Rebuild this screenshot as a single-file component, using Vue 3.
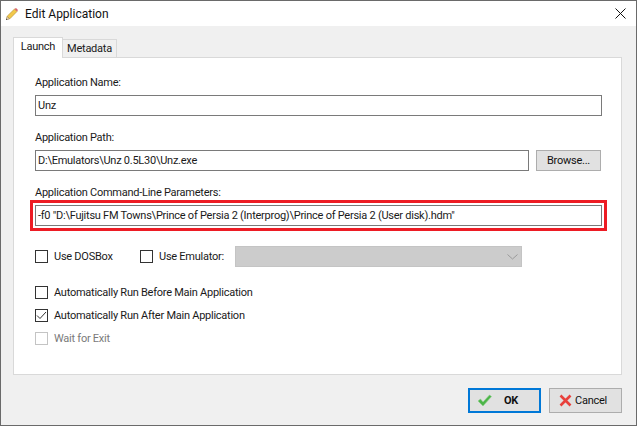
<script setup>
const autos = [
  { label: 'Automatically Run Before Main Application', checked: false, disabled: false },
  { label: 'Automatically Run After Main Application', checked: true, disabled: false },
  { label: 'Wait for Exit', checked: false, disabled: true },
]
</script>

<template>
  <div class="window">
    <header class="titlebar">
      <svg class="pencil" width="12" height="12" viewBox="1 1 12 12">
        <path d="M1 13 L2 9.5 L4.5 12 Z" fill="#e8d3a8" stroke="#8a7350" stroke-width=".5" />
        <path d="M1 13 L1.4 11.6 L2.4 12.6 Z" fill="#333" />
        <path d="M2.2 9.2 L9.5 2 L12 4.5 L4.8 11.8 Z" fill="#f2c84a" stroke="#b08a2a" stroke-width=".6" />
        <path d="M9.5 2 L11 1 L13 3 L12 4.5 Z" fill="#d9626a" />
      </svg>
      <span class="title">Edit Application</span>
      <svg class="close" width="11" height="11" viewBox="0 0 11 11">
        <path d="M.5 .5 L10.5 10.5 M10.5 .5 L.5 10.5" stroke="#111" stroke-width="1" fill="none" />
      </svg>
    </header>

    <div class="body">
      <nav class="tabs">
        <div class="tab active">Launch</div>
        <div class="tab">Metadata</div>
      </nav>

      <section class="panel">
        <label class="label">Application Name:</label>
        <div class="input">Unz</div>

        <label class="label">Application Path:</label>
        <div class="row">
          <div class="input grow">D:\Emulators\Unz 0.5L30\Unz.exe</div>
          <button class="btn browse">Browse...</button>
        </div>

        <label class="label">Application Command-Line Parameters:</label>
        <div class="highlighted">
          <div class="input">-f0 "D:\Fujitsu FM Towns\Prince of Persia 2 (Interprog)\Prince of Persia 2 (User disk).hdm"</div>
          <div class="redbox"></div>
        </div>

        <div class="emu-row">
          <span class="check-item dos">
            <span class="box"></span>
            <span>Use DOSBox</span>
          </span>
          <span class="check-item emu">
            <span class="box"></span>
            <span>Use Emulator:</span>
          </span>
          <div class="combo">
            <svg width="11" height="6" viewBox="0 0 11 6">
              <path d="M.5 .5 L5.5 5 L10.5 .5" stroke="#9a9a9a" fill="none" />
            </svg>
          </div>
        </div>

        <div class="autos">
          <div v-for="a in autos" :key="a.label" class="check-item auto" :class="{ disabled: a.disabled }">
            <span class="box">
              <svg v-if="a.checked" width="11" height="11" viewBox="0 0 11 11">
                <path d="M1 5.5 L4 8.5 L10 2" stroke="#333" stroke-width="1" fill="none" />
              </svg>
            </span>
            <span>{{ a.label }}</span>
          </div>
        </div>
      </section>

      <footer class="actions">
        <button class="btn action primary">
          <svg width="15" height="13" viewBox="0 0 15 13">
            <path d="M1 7 L3.5 5 L6 8 L12.5 1 L14.5 2.5 L6 12 Z" fill="#4cb548" stroke="#8fce8c" stroke-width=".6" />
          </svg>
          <span class="ok">OK</span>
        </button>
        <button class="btn action">
          <svg width="13" height="13" viewBox="0 0 13 13">
            <path d="M1.5 1.5 L11.5 11.5 M11.5 1.5 L1.5 11.5" stroke="#e8403c" stroke-width="2.6" fill="none" />
          </svg>
          <span class="cancel">Cancel</span>
        </button>
      </footer>
    </div>
  </div>
</template>

<style>
html, body { margin: 0; background: #f0f0f0; }
</style>

<style scoped>
.window {
  width: 637px;
  height: 426px;
  box-sizing: border-box;
  border: 1px solid #6a6a6a;
  display: flex;
  flex-direction: column;
  font-family: Roboto, "Noto Sans", sans-serif;
  font-size: 11px;
  letter-spacing: -0.25px;
  color: #1a1a1a;
  background: #f0f0f0;
}
.titlebar {
  height: 25px;
  background: #fff;
  display: flex;
  align-items: center;
  padding: 0 10px 0 5px;
  flex: none;
}
.pencil { margin-right: 7px; }
.title { flex: 1; font-size: 12px; letter-spacing: 0; color: #111; }
.body {
  flex: 1;
  padding: 12px 14px 0 12px;
  display: flex;
  flex-direction: column;
}
.tabs { display: flex; height: 20px; align-items: flex-end; position: relative; z-index: 1; margin-bottom: -1px; }
.tab {
  box-sizing: border-box;
  height: 19px;
  width: 54px;
  border: 1px solid #d9d9d9;
  border-left: 0;
  background: #f0f0f0;
  line-height: 17px;
  text-align: center;
}
.tab.active {
  width: 50px;
  height: 21px;
  border-left: 1px solid #d9d9d9;
  border-bottom: 0;
  background: #fff;
  line-height: 18px;
}
.panel {
  box-sizing: border-box;
  height: 318px;
  background: #fff;
  border: 1px solid #d9d9d9;
  padding: 15px 19px 0 21px;
  display: flex;
  flex-direction: column;
}
.label { height: 22px; line-height: 19px; }
.input {
  box-sizing: border-box;
  height: 21px;
  border: 1px solid #7a7a7a;
  background: #fff;
  padding: 0 2px;
  line-height: 20px;
  white-space: nowrap;
  overflow: hidden;
}
.panel > .input { margin-bottom: 12px; }
.row { display: flex; gap: 7px; margin-bottom: 12px; }
.grow { flex: 1; }
.btn {
  box-sizing: border-box;
  font: inherit;
  letter-spacing: inherit;
  color: #111;
  background: #e1e1e1;
  border: 1px solid #adadad;
  padding: 0;
}
.browse { width: 65px; height: 21px; margin-right: 1px; }
.highlighted { position: relative; margin-bottom: 20px; }
.redbox {
  position: absolute;
  left: -5px;
  right: -5px;
  top: -5px;
  bottom: -5px;
  border: 3px solid #ed1c24;
  pointer-events: none;
}
.emu-row { display: flex; align-items: center; height: 21px; }
.check-item { display: flex; align-items: center; gap: 6px; }
.dos { width: 105px; }
.emu { width: 95px; }
.box {
  box-sizing: border-box;
  width: 13px;
  height: 13px;
  border: 1px solid #333;
  background: #fff;
  display: flex;
  align-items: center;
  justify-content: center;
  flex: none;
}
.combo {
  box-sizing: border-box;
  width: 287px;
  height: 21px;
  background: #cccccc;
  border: 1px solid #c4c4c4;
  display: flex;
  align-items: center;
  justify-content: flex-end;
  padding-right: 3px;
}
.autos { margin-top: 18px; display: flex; flex-direction: column; gap: 9px; }
.auto { height: 13px; padding-top: 1px; box-sizing: content-box; }
.disabled { color: #7a7a7a; }
.disabled .box { border-color: #c4c4c4; }
.actions {
  display: flex;
  justify-content: flex-end;
  gap: 8px;
  margin-top: 13px;
}
.action {
  width: 73px;
  height: 25px;
  display: flex;
  align-items: center;
  padding: 0 0 0 9px;
  background: #e1e1e1;
}
.primary { border: 2px solid #0078d7; padding-left: 7px; }
.ok { font-weight: 700; margin-left: 12px; }
.cancel { margin-left: 3px; }
</style>
